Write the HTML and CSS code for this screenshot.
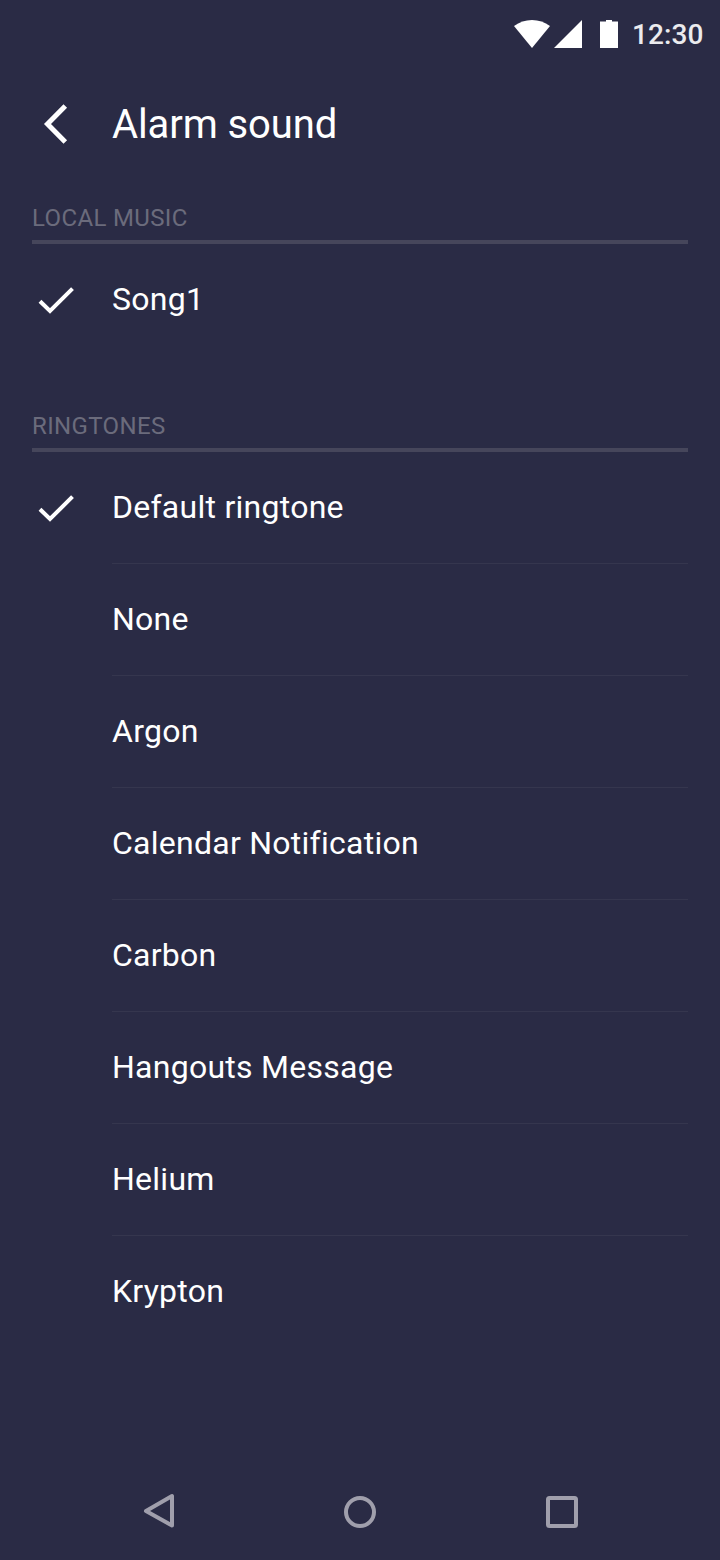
FILE: index.html
```html
<!DOCTYPE html>
<html lang="en">
<head>
<meta charset="utf-8">
<title>Alarm sound</title>
<link rel="stylesheet" href="styles.css">
</head>
<body>
<div class="screen">
  <div class="status">
    <svg class="status-icons" width="120" height="68" viewBox="0 0 120 68" fill="#fff">
      <path d="M14 26Q22 20 32 20T50 26L32 48Z"/>
      <path d="M82 20V48H54Z"/>
      <path d="M106 20h6v1.500h6V48h-18V21.500h6Z"/>
    </svg>
    <span class="clock">12:30</span>
  </div>
  <header class="header">
    <svg class="back" width="48" height="48" viewBox="0 0 48 48" fill="none" stroke="#fff" stroke-width="5"><path d="M33.300 6 15.500 24 33.300 42"/></svg>
    <h1 class="title">Alarm sound</h1>
  </header>
  <main>
    <section class="section">
      <h2 class="label">LOCAL MUSIC</h2>
      <ul class="list">
        <li class="row"><span class="mark"><svg width="48" height="48" viewBox="0 0 48 48" fill="none" stroke="#fff" stroke-width="4"><path d="M8 25.200 18 35 40.500 12.700"/></svg></span><span class="name">Song1</span></li>
      </ul>
    </section>
    <section class="section">
      <h2 class="label">RINGTONES</h2>
      <ul class="list">
        <li class="row"><span class="mark"><svg width="48" height="48" viewBox="0 0 48 48" fill="none" stroke="#fff" stroke-width="4"><path d="M8 25.200 18 35 40.500 12.700"/></svg></span><span class="name">Default ringtone</span></li>
        <li class="row"><span class="mark"></span><span class="name">None</span></li>
        <li class="row"><span class="mark"></span><span class="name">Argon</span></li>
        <li class="row"><span class="mark"></span><span class="name">Calendar Notification</span></li>
        <li class="row"><span class="mark"></span><span class="name">Carbon</span></li>
        <li class="row"><span class="mark"></span><span class="name">Hangouts Message</span></li>
        <li class="row"><span class="mark"></span><span class="name">Helium</span></li>
        <li class="row"><span class="mark"></span><span class="name">Krypton</span></li>
      </ul>
    </section>
  </main>
  <nav class="nav">
    <svg width="48" height="48" viewBox="0 0 48 48"><path d="M37 8V37.500L11 23Z"/></svg>
    <svg width="48" height="48" viewBox="0 0 48 48"><circle cx="24" cy="24" r="14"/></svg>
    <svg width="48" height="48" viewBox="0 0 48 48"><rect x="11" y="10" width="28" height="28" rx="1.500"/></svg>
  </nav>
</div>
</body>
</html>
```
FILE: styles.css
```css
* { box-sizing: border-box; }
body { margin: 0; background: #2a2b45; }
.screen {
  width: 720px;
  height: 1560px;
  display: flex;
  flex-direction: column;
  font-family: Roboto, sans-serif;
  color: #fff;
  overflow: hidden;
}
.status {
  height: 68px;
  flex: none;
  display: flex;
  justify-content: flex-end;
  align-items: center;
  padding-right: 16px;
}
.status-icons { margin-right: 12px; }
.clock { width: 72px; padding-top: 2px; font-size: 28px; line-height: 66px; font-weight: 500; letter-spacing: 0.1px; color: #ebebee; }
.header {
  height: 112px;
  flex: none;
  display: flex;
  align-items: center;
  gap: 32px;
  padding: 0 32px;
}
.title { margin: 0; padding-top: 2px; font-size: 40px; line-height: 48px; font-weight: 400; letter-spacing: -0.1px; }
.section { padding: 0 32px; margin-bottom: 32px; }
.label {
  margin: 0;
  height: 64px;
  padding-top: 24px;
  border-bottom: 4px solid #46465b;
  font-size: 24px;
  line-height: 28px;
  font-weight: 400;
  letter-spacing: 0.36px;
  color: #6b6b7c;
}
.list { margin: 0; padding: 0; list-style: none; }
.row { display: flex; align-items: center; height: 112px; }
.mark { width: 80px; height: 48px; flex: none; }
.name {
  flex: 1;
  height: 112px;
  border-bottom: 1px solid #35364e;
  font-size: 32px;
  line-height: 111px;
  letter-spacing: 0.26px;
}
.row:last-child .name { border-bottom-color: transparent; }
.nav {
  margin-top: auto;
  height: 96px;
  flex: none;
  display: flex;
  justify-content: center;
  align-items: center;
  gap: 153px;
}
.nav svg { fill: none; stroke: #a09fac; stroke-width: 4; stroke-linejoin: round; }
```
